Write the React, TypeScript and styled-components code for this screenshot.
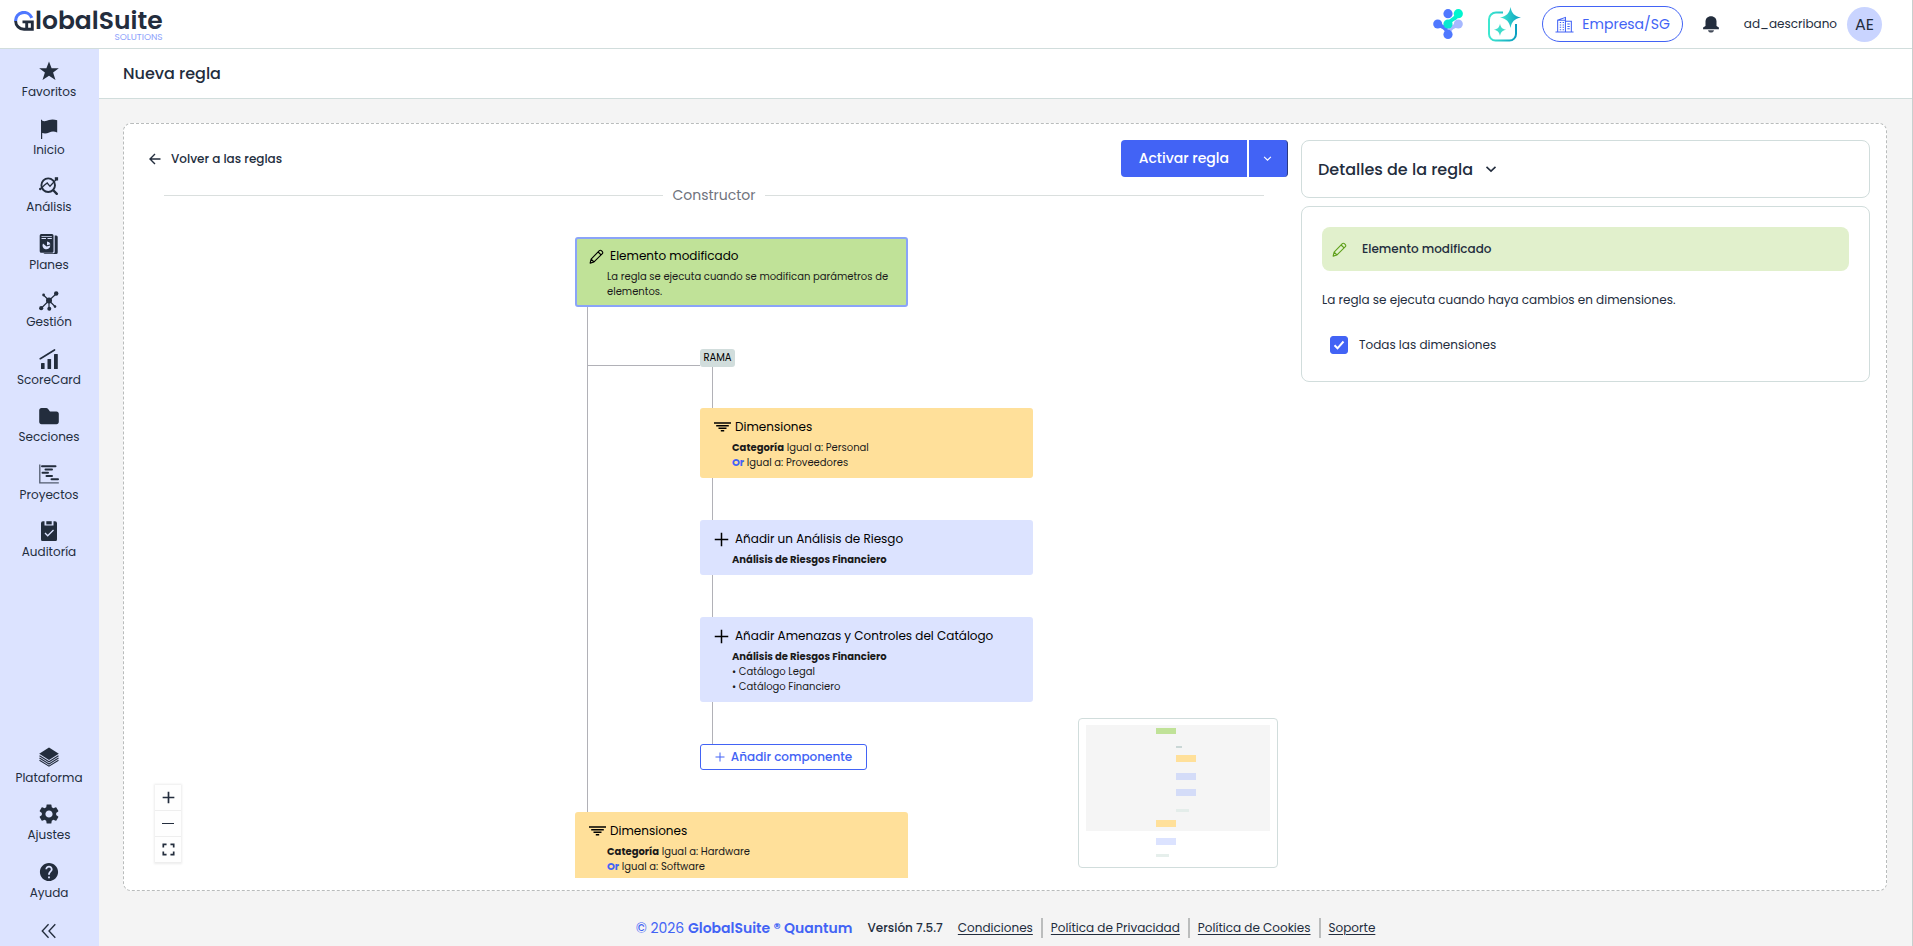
import React from "react";
import styled, { createGlobalStyle } from "styled-components";
import { MdSettings, MdHelp } from "react-icons/md";

const ink = "#232d3d";
const primary = "#4263f5";
const line = "#d1dddc";

const GlobalStyle = createGlobalStyle`
  *, *::before, *::after { box-sizing: border-box; }
  body {
    margin: 0;
    background: #f4f4f4;
    color: ${ink};
    font-family: Poppins, Inter, "Noto Sans", sans-serif;
    font-size: 12px;
  }
  button, input { font: inherit; color: inherit; }
  button { background: none; border: 0; padding: 0; cursor: pointer; }
  a { color: inherit; text-decoration: none; }
  ul { list-style: none; margin: 0; padding: 0; }
  h1, h2, p { margin: 0; }
  svg { display: block; flex: none; }
`;

/* ---------- shell ---------- */

const Shell = styled.div`
  min-height: 100vh;
  display: grid;
  grid-template: 49px 1fr / 99px minmax(0, 1fr);
  border-right: 1px solid #c9cfce;
`;

const TopBar = styled.header`
  grid-column: 1 / -1;
  display: flex;
  align-items: center;
  justify-content: space-between;
  padding: 0 30px 0 14px;
  background: #fff;
  border-bottom: 1px solid ${line};
`;

const Brand = styled.a`
  display: grid;
  grid-template-columns: auto auto;
  align-items: center;
  column-gap: 1px;
  padding-top: 2px;
`;

const BrandName = styled.span`
  font-size: 25px;
  font-weight: 600;
  line-height: 24px;
`;

const BrandTag = styled.span`
  grid-column: 1 / -1;
  justify-self: end;
  font-size: 9px;
  line-height: 8px;
  color: #8ea2fb;
`;

const TopTools = styled.div`
  display: flex;
  align-items: center;
  gap: 20px;
`;

const IconButton = styled.button`
  display: grid;
  place-items: center;
  width: 36px;
  height: 36px;
`;

const CompanyButton = styled.button`
  display: flex;
  align-items: center;
  gap: 8px;
  height: 36px;
  padding: 0 12px;
  border: 1px solid ${primary};
  border-radius: 18px;
  color: ${primary};
  font-size: 14px;
`;

const BellButton = styled.button`
  display: grid;
  place-items: center;
  width: 16px;
`;

const User = styled.div`
  display: flex;
  align-items: center;
  gap: 10px;
  margin-left: 5px;
`;

const Avatar = styled.span`
  display: grid;
  place-items: center;
  width: 35px;
  height: 35px;
  border-radius: 50%;
  background: #c9d4ff;
  font-size: 16px;
`;

/* ---------- sidebar ---------- */

const Sidebar = styled.nav`
  display: flex;
  flex-direction: column;
  justify-content: space-between;
  padding: 12px 1px 6px 0;
  background: #dce3ff;
`;

const MenuList = styled.ul<{ $height: number }>`
  display: grid;
  grid-auto-rows: 1fr;
  height: ${(p) => p.$height}px;
`;

const MenuLink = styled.a`
  display: flex;
  flex-direction: column;
  align-items: center;
  gap: 2px;
  line-height: 18px;
`;

const CollapseButton = styled.button`
  display: grid;
  place-items: center;
  width: 100%;
  height: 18px;
  margin-top: 3px;
`;

/* ---------- content ---------- */

const Main = styled.main`
  display: flex;
  flex-direction: column;
`;

const PageTitle = styled.h1`
  padding: 0 24px;
  background: #fff;
  border-bottom: 1px solid ${line};
  font-size: 16px;
  font-weight: 500;
  line-height: 49px;
`;

const Card = styled.section`
  flex: 1;
  display: grid;
  grid-template-columns: minmax(0, 115fr) minmax(0, 57fr);
  gap: 13px;
  margin: 24px 25px 0 24px;
  padding: 16px 16px 12px;
  background: #fff;
  border: 1px dashed #b9bcbc;
  border-radius: 8px;
`;

const Builder = styled.div`
  display: flex;
  flex-direction: column;
`;

const BuilderBar = styled.div`
  display: flex;
  align-items: center;
  justify-content: space-between;
  padding-left: 8px;
`;

const BackLink = styled.a`
  display: flex;
  align-items: center;
  gap: 9px;
  font-weight: 500;
`;

const SplitButton = styled.div`
  display: flex;
  gap: 2px;
`;

const ActivateButton = styled.button`
  height: 37px;
  padding: 0 18px;
  border-radius: 4px 0 0 4px;
  background: ${primary};
  color: #fff;
  font-size: 14px;
  font-weight: 500;
`;

const MoreButton = styled.button`
  display: grid;
  place-items: center;
  width: 39px;
  height: 37px;
  border-right: 1px solid #2b3a80;
  border-radius: 0 4px 4px 0;
  background: ${primary};
  color: #fff;
`;

const Divider = styled.div`
  display: flex;
  align-items: center;
  gap: 9px;
  margin: 8px 24px 0;
  color: #6f737d;
  font-size: 14px;
  line-height: 20px;

  &::before,
  &::after {
    content: "";
    flex: 1;
    height: 1px;
    background: #dadfde;
  }
`;

const Canvas = styled.div`
  position: relative;
  flex: 1;
  min-height: 640px;
  margin-top: 2px;
  overflow: hidden;
`;

const Edges = styled.svg`
  position: absolute;
  inset: 0;
  width: 100%;
  height: 100%;
  stroke: #b1b1b7;
  fill: none;
`;

type Tone = "green" | "yellow" | "blue";
const tones: Record<Tone, string> = {
  green: "#c0e298",
  yellow: "#ffe09a",
  blue: "#dce3ff",
};

const NodeBox = styled.article<{ $x: number; $y: number; $tone: Tone; $selected?: boolean }>`
  position: absolute;
  left: ${(p) => p.$x}px;
  top: ${(p) => p.$y}px;
  width: 333px;
  padding: 8px 12px 6px;
  border: 2px solid ${(p) => (p.$selected ? "#8aa4f8" : tones[p.$tone])};
  border-radius: 3px;
  background: ${(p) => tones[p.$tone]};
  color: #1a1a1a;
`;

const NodeTitle = styled.h2`
  display: grid;
  grid-template-columns: 15px 1fr;
  align-items: center;
  justify-items: start;
  gap: 6px;
  font-size: 12px;
  font-weight: 400;
  line-height: 18px;
  color: #000;
`;

const NodeBody = styled.div`
  padding: 4px 0 0 18px;
  font-size: 10px;
  line-height: 15px;
`;

const OrWord = styled.b`
  color: ${primary};
`;

const BranchTag = styled.span`
  position: absolute;
  left: 560px;
  top: 142px;
  width: 35px;
  border-radius: 3px;
  background: #d1dddc;
  color: #000;
  font-size: 10px;
  line-height: 18px;
  text-align: center;
`;

const AddButton = styled.button`
  position: absolute;
  left: 560px;
  top: 537px;
  display: flex;
  align-items: center;
  justify-content: center;
  gap: 6px;
  width: 167px;
  height: 26px;
  border: 1px solid ${primary};
  border-radius: 3px;
  background: #fff;
  color: ${primary};
  font-weight: 500;
`;

const Controls = styled.div`
  position: absolute;
  left: 15px;
  bottom: 15px;
  display: grid;
  grid-auto-rows: 26px;
  width: 26px;
  box-shadow: 0 0 2px 1px rgba(0, 0, 0, 0.08);
`;

const ControlButton = styled.button`
  display: grid;
  place-items: center;
  background: #fefefe;
  border-bottom: 1px solid #eee;
`;

const MiniMap = styled.svg`
  position: absolute;
  right: 10px;
  bottom: 10px;
  background: #fff;
  border: 1px solid ${line};
  border-radius: 4px;
`;

/* ---------- details ---------- */

const Aside = styled.aside`
  display: flex;
  flex-direction: column;
  gap: 8px;
`;

const Panel = styled.div`
  border: 1px solid ${line};
  border-radius: 8px;
`;

const DetailsButton = styled.button`
  display: flex;
  align-items: center;
  gap: 12px;
  width: 100%;
  height: 56px;
  padding: 0 16px;
  font-size: 16px;
  font-weight: 500;
`;

const PanelBody = styled.div`
  display: flex;
  flex-direction: column;
  align-items: stretch;
  padding: 20px 20px 26px;
`;

const ElementHead = styled.h2`
  display: flex;
  align-items: center;
  gap: 15px;
  height: 44px;
  padding: 0 10px;
  border-radius: 8px;
  background: #e1f0cc;
  font-size: 12px;
  font-weight: 500;
`;

const GreenTint = styled.span`
  color: #5fa01b;
`;

const Explanation = styled.p`
  margin-top: 19px;
  line-height: 20px;
`;

const CheckLabel = styled.label`
  display: flex;
  align-items: center;
  gap: 11px;
  margin: 25px 8px 0;
  line-height: 20px;
`;

const CheckWrap = styled.span`
  display: grid;
  place-items: center;

  > * { grid-area: 1 / 1; }
  svg { pointer-events: none; }
`;

const CheckInput = styled.input`
  appearance: none;
  width: 18px;
  height: 18px;
  margin: 0;
  border: 1px solid ${primary};
  border-radius: 3px;

  &:checked { background: ${primary}; }
`;

/* ---------- footer ---------- */

const Footer = styled.footer`
  display: flex;
  align-items: center;
  justify-content: center;
  gap: 15px;
  height: 55px;
  padding-top: 19px;
`;

const Copyright = styled.span`
  color: ${primary};
  font-size: 14px;

  b { font-weight: 600; }
`;

const Version = styled.span`
  font-weight: 500;
`;

const FooterLinks = styled.ul`
  display: flex;

  li { line-height: 20px; }
  li + li {
    margin-left: 8px;
    padding-left: 8px;
    border-left: 2px solid #bbbdbd;
  }
  a { text-decoration: underline; text-underline-offset: 2px; }
`;

/* ---------- drawings ---------- */

const Glyph = ({ children, size = 20 }: { children: React.ReactNode; size?: number }) => (
  <svg width={size} height={size} viewBox="0 0 20 20" fill="currentColor" aria-hidden="true">
    {children}
  </svg>
);

const Star = () => (
  <Glyph>
    <path d="M10 .5 12.600 7.200h7.200l-5.700 4.300L16.500 19 10 14.800 3.500 19l2.400-7.500L.2 7.200h7.200z" />
  </Glyph>
);
const Flag = () => (
  <Glyph>
    <path d="M2 .8h1v.7C5 2.800 7.500 2 10 1c2.700-1 5.500-.7 8.200.3v12.200c-2.800-1.200-5.500-1.200-8 0-2.500 1-4.700 1.200-7 .4V20H2z" />
  </Glyph>
);
const Analysis = () => (
  <Glyph>
    <g fill="none" stroke="currentColor">
      <circle cx="9.200" cy="9.200" r="6.800" strokeWidth="1.900" />
      <path strokeWidth="2.400" strokeLinecap="round" d="m14.500 14.500 3.300 3.300" />
      <path strokeWidth="1.300" d="M.8 13.500 5.600 9l2.600-2 2.800 3.300L18 2.600" />
    </g>
    <circle cx="1.300" cy="13" r="1.200" />
    <path d="M15.800 1.200h3.300v3.300h-3.300z" />
  </Glyph>
);
const Plans = () => (
  <Glyph>
    <path d="M2.200 0H13a1.500 1.500 0 0 1 1.500 1.500v15.700a1.500 1.500 0 0 1-1.500 1.500H2.200A1.500 1.500 0 0 1 .7 17.200V1.500A1.500 1.500 0 0 1 2.200 0z" />
    <path d="M15.700 1.500h1.500a1.500 1.500 0 0 1 1.500 1.500v15.500A1.500 1.500 0 0 1 17.200 20H5.500l-1.200-.7h10a1.400 1.400 0 0 0 1.400-1.400z" />
    <path d="M2.500 2.200h10.300v.9H2.500zM2.500 4h4.500v.9H2.500zM8.500 4h4.300v.9H8.500z" fill="#dce3ff" />
    <path d="M4 9.500 7.500 12.500l3.800-1a3.900 3.900 0 1 1-7.300-2zM8 7.600a3.800 3.800 0 0 1 3.500 2.700L8 11.300z" fill="#dce3ff" />
  </Glyph>
);
const Network = () => (
  <Glyph>
    <path d="M10 9.500 17 3M10 9.500 4.500 4M10 9.500 2.500 17M10 9.500V17M10 9.500l6 6" stroke="currentColor" strokeWidth="1.200" />
    <circle cx="10" cy="9.500" r="3" />
    <circle cx="17.200" cy="2.500" r="2.200" />
    <circle cx="4.600" cy="4" r="1.400" />
    <circle cx="2.200" cy="17.200" r="2.100" />
    <circle cx="10.300" cy="17.800" r="2" />
    <circle cx="16" cy="15.600" r="1.300" />
  </Glyph>
);
const Score = () => (
  <Glyph>
    <path d="M1.300 9.700 15.500 1" stroke="currentColor" strokeWidth="1.700" strokeLinecap="round" />
    <rect x="2" y="14" width="3.600" height="6" rx=".6" />
    <rect x="8.500" y="10" width="3.600" height="10" rx=".6" />
    <rect x="15" y="5" width="3.800" height="15" rx=".6" />
  </Glyph>
);
const Folder = () => (
  <Glyph>
    <path d="M2.500 2h4.700c.8 0 1.400.3 1.900 1L11 5.500h6.500c1.400 0 2.300 1 2.300 2.300v8c0 1.400-.9 2.400-2.300 2.400h-15C1.100 18.200.2 17.200.2 15.800V4.400C.2 3 1.100 2 2.500 2z" />
  </Glyph>
);
const Gantt = () => (
  <Glyph>
    <path d="M.8.500v18.400h19" fill="none" stroke="currentColor" strokeWidth="1.300" opacity=".75" />
    <path d="M3 2.300h13.500M6.500 5.500H13M3.500 8.700H9M7.500 12H13M12.500 15.300h6.500" stroke="currentColor" strokeWidth="2" strokeLinecap="round" />
  </Glyph>
);
const Audit = () => (
  <Glyph>
    <path d="M4 .2h1.500V4.500h9V.2H16A2 2 0 0 1 18 2.200v16a2 2 0 0 1-2 2H4a2 2 0 0 1-2-2v-16A2 2 0 0 1 4 .2z" />
    <path d="M7.300.2h5.400v3.200H7.300z" />
    <path d="m6 12 2.700 2.800L14.500 9" fill="none" stroke="#dce3ff" strokeWidth="1.300" />
  </Glyph>
);
const Layers = () => (
  <Glyph>
    <path d="M10 .5 19.800 6.700 10 13 .2 6.700z" />
    <path d="m.5 8.800 9.500 6 9.500-6M.5 11l9.500 6 9.500-6M.5 13.200l9.500 6 9.500-6" fill="none" stroke="currentColor" strokeWidth="1.100" />
  </Glyph>
);
const Collapse = () => (
  <Glyph size={18}>
    <path d="M9.500 2.500 2.500 10l7 7.500M17 2.500 10 10l7 7.500" fill="none" stroke="currentColor" strokeWidth="1.500" />
  </Glyph>
);
const Bell = () => (
  <svg width="16" height="17" viewBox="0 0 16 17" fill="currentColor" aria-hidden="true">
    <path d="M8 .3c3.400 0 5.500 2.300 5.500 5.300v5H2.500v-5C2.500 2.600 4.600.3 8 .3z" />
    <path d="M2.500 10h11l2.400 1.600v1.600H.1v-1.600z" />
    <path d="M5 14.200h6c-.3 1.500-1.400 2.400-3 2.400s-2.700-.9-3-2.400z" opacity=".85" />
  </svg>
);
const Pencil = () => (
  <Glyph size={15}>
    <path
      d="M1.500 18.800 2.800 13.500 13.800 2.200a1.900 1.900 0 0 1 2.700 0l1.300 1.300a1.900 1.900 0 0 1 0 2.700L6.700 17.300zM12.200 4l3.900 3.900M2.800 13.500l3.900 3.800"
      fill="none"
      stroke="currentColor"
      strokeWidth="1.500"
      strokeLinejoin="round"
    />
  </Glyph>
);
const Filter = () => (
  <svg width="17" height="12" viewBox="0 0 17 12" fill="none" stroke="currentColor" strokeWidth="1.500" aria-hidden="true">
    <path d="M0 2h17M2.200 4.700h12.600M4.500 7.300h8M6.800 9.800h3.400" />
  </svg>
);
const Plus = ({ size = 15, weight = 2 }: { size?: number; weight?: number }) => (
  <Glyph size={size}>
    <path d="M10 1v18M1 10h18" stroke="currentColor" strokeWidth={weight} />
  </Glyph>
);
const Chevron = ({ size = 10 }: { size?: number }) => (
  <Glyph size={size}>
    <path d="m2.500 6.500 7.500 7 7.500-7" fill="none" stroke="currentColor" strokeWidth="2.600" />
  </Glyph>
);

const BrandG = () => (
  <svg width="20" height="20" viewBox="0 0 20 20" fill="none" aria-hidden="true">
    <path d="M1.600 10A8.400 8.400 0 0 1 17.800 6.800" stroke="#4f78ff" strokeWidth="3.200" />
    <path d="M1.600 10A8.400 8.400 0 0 0 10 18.300h8.300v-7.400H8.500M12.700 11v7" stroke={ink} strokeWidth="2.900" />
  </svg>
);

const Molecule = () => (
  <svg width="30" height="30" viewBox="0 0 30 30" aria-hidden="true">
    <path d="M5 16c5 1 8 3 10 8" fill="none" stroke="#4f78ff" strokeWidth="4" />
    <path d="M25 16c-5 1-8 3-10 8" fill="none" stroke="#a6b8ff" strokeWidth="4" />
    <path d="M25 5c-1 5-8 5-10 10" fill="none" stroke="#05efd0" strokeWidth="4" />
    <circle cx="15" cy="4.700" r="4.600" fill="#4f78ff" />
    <circle cx="4.700" cy="15" r="4.500" fill="#4f78ff" />
    <circle cx="25.300" cy="15" r="4.500" fill="#a6b8ff" />
    <circle cx="15" cy="25.400" r="4.600" fill="#4f78ff" />
    <circle cx="25.300" cy="4.700" r="4.600" fill="#00f5cf" />
    <circle cx="15" cy="15" r="4.600" fill="#0be8d0" />
  </svg>
);

const Assistant = () => (
  <svg width="34" height="36" viewBox="0 0 34 36" aria-hidden="true">
    <defs>
      <linearGradient id="aqua" x1="0" y1="0" x2="1" y2="0">
        <stop offset="0" stopColor="#3fe8d0" />
        <stop offset="1" stopColor="#0a9fc0" />
      </linearGradient>
    </defs>
    <path d="M16 6.500H9a7 7 0 0 0-7 7V28a6.500 6.500 0 0 0 6.500 6.500h14A6.500 6.500 0 0 0 29 28V18" fill="none" stroke="url(#aqua)" strokeWidth="2" />
    <path d="M23.500 1c1.200 6.500 4 9.300 10.500 10.500-6.500 1.200-9.300 4-10.500 10.500-1.200-6.500-4-9.300-10.500-10.500C19.500 10.300 22.300 7.500 23.500 1z" fill="url(#aqua)" />
    <path d="M13 17.500c.7 4 2.300 5.600 6.300 6.300-4 .7-5.600 2.300-6.300 6.300-.7-4-2.300-5.600-6.300-6.300 4-.7 5.600-2.300 6.300-6.300z" fill="#3fdccb" />
  </svg>
);

const Building = () => (
  <svg width="19" height="17" viewBox="0 0 20 17" fill="none" stroke="currentColor" strokeWidth="1.100" aria-hidden="true">
    <path d="M.5 16.300h19M2.800 16V4L11 1v15M2.800 4H11M11 5h6.200v11" />
    <path d="M5 6.500h1.500M8 6.500h1.500M5 9h1.500M8 9h1.500M5 11.500h1.500M8 11.500h1.500M5 14h1.500M8 14h1.500M13 8h2.500M13 10.500h2.500M13 13h2.500" />
  </svg>
);

const mainMenu = [
  { label: "Favoritos", icon: <Star /> },
  { label: "Inicio", icon: <Flag /> },
  { label: "Análisis", icon: <Analysis /> },
  { label: "Planes", icon: <Plans /> },
  { label: "Gestión", icon: <Network /> },
  { label: "ScoreCard", icon: <Score /> },
  { label: "Secciones", icon: <Folder /> },
  { label: "Proyectos", icon: <Gantt /> },
  { label: "Auditoría", icon: <Audit /> },
];

const systemMenu = [
  { label: "Plataforma", icon: <Layers /> },
  { label: "Ajustes", icon: <MdSettings size={20} viewBox="2 2 20 20" /> },
  { label: "Ayuda", icon: <MdHelp size={20} viewBox="1 1 22 22" /> },
];

const Menu = ({ items, height }: { items: typeof mainMenu; height: number }) => (
  <MenuList $height={height}>
    {items.map((item) => (
      <li key={item.label}>
        <MenuLink href="#">
          {item.icon}
          {item.label}
        </MenuLink>
      </li>
    ))}
  </MenuList>
);

const miniNodes = [
  [77, 9, 20, 6, "#c0e298"],
  [97, 27, 6, 2, "#cad7d6"],
  [97, 36, 20, 7, "#ffe09a"],
  [97, 54, 20, 7, "#d4dcf8"],
  [97, 70, 20, 7, "#d4dcf8"],
  [97, 90, 13, 3, "#e4edea"],
  [77, 101, 20, 7, "#ffe09a"],
  [77, 119, 20, 7, "#dce3ff"],
  [77, 135, 13, 3, "#e6efec"],
] as const;

export default function App() {
  const [all, setAll] = React.useState(true);
  return (
    <>
      <GlobalStyle />
      <Shell>
        <TopBar>
          <Brand href="#">
            <BrandG />
            <BrandName>lobalSuite</BrandName>
            <BrandTag>SOLUTIONS</BrandTag>
          </Brand>
          <TopTools>
            <IconButton aria-label="Quantum"><Molecule /></IconButton>
            <IconButton aria-label="Asistente"><Assistant /></IconButton>
            <CompanyButton><Building />Empresa/SG</CompanyButton>
            <BellButton aria-label="Notificaciones"><Bell /></BellButton>
            <User>
              ad_aescribano
              <Avatar>AE</Avatar>
            </User>
          </TopTools>
        </TopBar>

        <Sidebar>
          <Menu items={mainMenu} height={518} />
          <div>
            <Menu items={systemMenu} height={172} />
            <CollapseButton aria-label="Contraer menú"><Collapse /></CollapseButton>
          </div>
        </Sidebar>

        <Main>
          <PageTitle>Nueva regla</PageTitle>
          <Card>
            <Builder>
              <BuilderBar>
                <BackLink href="#">
                  <svg width="14" height="14" viewBox="0 0 14 14" fill="none" stroke="currentColor" strokeWidth="1.400" aria-hidden="true">
                    <path d="M12.500 7h-10M7 2 2 7l5 5" />
                  </svg>
                  Volver a las reglas
                </BackLink>
                <SplitButton>
                  <ActivateButton>Activar regla</ActivateButton>
                  <MoreButton aria-label="Más opciones"><Chevron size={9} /></MoreButton>
                </SplitButton>
              </BuilderBar>
              <Divider>Constructor</Divider>
              <Canvas>
                <Edges>
                  <path d="M447.500 100V606M447.500 158.500H560M572.500 160V540" />
                </Edges>
                <NodeBox $x={435} $y={30} $tone="green" $selected>
                  <NodeTitle><Pencil />Elemento modificado</NodeTitle>
                  <NodeBody>La regla se ejecuta cuando se modifican parámetros de elementos.</NodeBody>
                </NodeBox>
                <BranchTag>RAMA</BranchTag>
                <NodeBox $x={560} $y={201} $tone="yellow">
                  <NodeTitle><Filter />Dimensiones</NodeTitle>
                  <NodeBody>
                    <div><b>Categoría</b> Igual a: Personal</div>
                    <div><OrWord>Or</OrWord> Igual a: Proveedores</div>
                  </NodeBody>
                </NodeBox>
                <NodeBox $x={560} $y={313} $tone="blue">
                  <NodeTitle><Plus />Añadir un Análisis de Riesgo</NodeTitle>
                  <NodeBody><b>Análisis de Riesgos Financiero</b></NodeBody>
                </NodeBox>
                <NodeBox $x={560} $y={410} $tone="blue">
                  <NodeTitle><Plus />Añadir Amenazas y Controles del Catálogo</NodeTitle>
                  <NodeBody>
                    <b>Análisis de Riesgos Financiero</b>
                    <div>• Catálogo Legal</div>
                    <div>• Catálogo Financiero</div>
                  </NodeBody>
                </NodeBox>
                <AddButton><Plus size={10} />Añadir componente</AddButton>
                <NodeBox $x={435} $y={605} $tone="yellow">
                  <NodeTitle><Filter />Dimensiones</NodeTitle>
                  <NodeBody>
                    <div><b>Categoría</b> Igual a: Hardware</div>
                    <div><OrWord>Or</OrWord> Igual a: Software</div>
                  </NodeBody>
                </NodeBox>
                <Controls>
                  <ControlButton aria-label="Acercar"><Plus size={13} weight={2.600} /></ControlButton>
                  <ControlButton aria-label="Alejar">
                    <Glyph size={12}><path d="M0 9.200h20" stroke="currentColor" strokeWidth="1.700" /></Glyph>
                  </ControlButton>
                  <ControlButton aria-label="Ajustar vista">
                    <Glyph size={13}>
                      <path d="M2 7V2h5M13 2h5v5M18 13v5h-5M7 18H2v-5" fill="none" stroke="currentColor" strokeWidth="2.600" />
                    </Glyph>
                  </ControlButton>
                </Controls>
                <MiniMap width="200" height="150" viewBox="0 0 198 148" aria-label="Mapa">
                  <rect x="7" y="6" width="184" height="106" fill="#f5f5f5" />
                  {miniNodes.map(([x, y, w, h, fill]) => (
                    <rect key={`${x}-${y}`} x={x} y={y} width={w} height={h} fill={fill} />
                  ))}
                </MiniMap>
              </Canvas>
            </Builder>

            <Aside>
              <Panel>
                <DetailsButton>Detalles de la regla <Chevron size={12} /></DetailsButton>
              </Panel>
              <Panel>
                <PanelBody>
                  <ElementHead>
                    <GreenTint><Pencil /></GreenTint>
                    Elemento modificado
                  </ElementHead>
                  <Explanation>La regla se ejecuta cuando haya cambios en dimensiones.</Explanation>
                  <CheckLabel>
                    <CheckWrap>
                      <CheckInput type="checkbox" checked={all} onChange={(e) => setAll(e.target.checked)} />
                      {all && (
                        <svg width="12" height="12" viewBox="0 0 12 12" fill="none" stroke="#fff" strokeWidth="2" aria-hidden="true">
                          <path d="m1.500 6.300 3 3 6-6.800" />
                        </svg>
                      )}
                    </CheckWrap>
                    Todas las dimensiones
                  </CheckLabel>
                </PanelBody>
              </Panel>
            </Aside>
          </Card>

          <Footer>
            <Copyright>© 2026 <b>GlobalSuite ® Quantum</b></Copyright>
            <Version>Versión 7.5.7</Version>
            <FooterLinks>
              <li><a href="#">Condiciones</a></li>
              <li><a href="#">Política de Privacidad</a></li>
              <li><a href="#">Política de Cookies</a></li>
              <li><a href="#">Soporte</a></li>
            </FooterLinks>
          </Footer>
        </Main>
      </Shell>
    </>
  );
}
